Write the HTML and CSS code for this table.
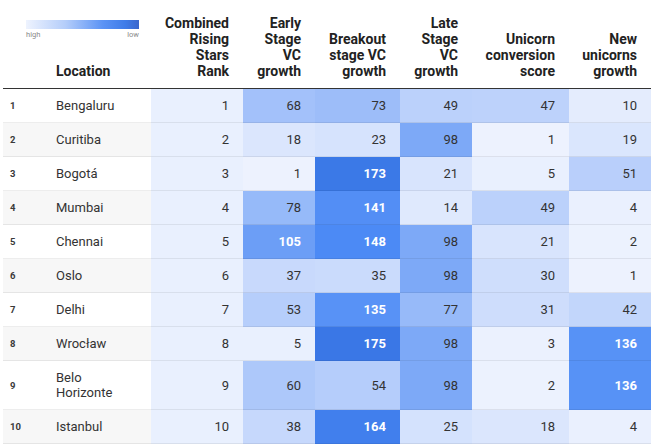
FILE: index.html
```html
<!DOCTYPE html>
<html lang="en">
<head>
<meta charset="utf-8">
<title>Rising Stars</title>
<link rel="stylesheet" href="styles.css">
</head>
<body>
<table class="heat">
  <colgroup>
    <col class="c-idx"><col class="c-loc"><col class="c-comb"><col class="c-early"><col class="c-break"><col class="c-late"><col class="c-uni"><col class="c-new">
  </colgroup>
  <thead>
    <tr>
      <th colspan="2" class="h-loc">
        <div class="h-loc-inner">
          <div class="legend">
            <div class="legend-bar"></div>
            <div class="legend-labels"><span>high</span><span>low</span></div>
          </div>
          <div class="loc-label">Location</div>
        </div>
      </th>
      <th>Combined<br>Rising<br>Stars<br>Rank</th>
      <th>Early<br>Stage<br>VC<br>growth</th>
      <th>Breakout<br>stage VC<br>growth</th>
      <th>Late<br>Stage<br>VC<br>growth</th>
      <th>Unicorn<br>conversion<br>score</th>
      <th>New<br>unicorns<br>growth</th>
    </tr>
  </thead>
  <tbody>
    <tr>
      <td class="idx">1</td><td class="loc">Bengaluru</td><td class="num comb">1</td>
      <td class="num" style="background:#a3c1fa">68</td>
      <td class="num" style="background:#9dbdf9">73</td>
      <td class="num" style="background:#bbd1fb">49</td>
      <td class="num" style="background:#bdd2fb">47</td>
      <td class="num" style="background:#e4ecfd">10</td>
    </tr>
    <tr>
      <td class="idx">2</td><td class="loc">Curitiba</td><td class="num comb">2</td>
      <td class="num" style="background:#dbe6fd">18</td>
      <td class="num" style="background:#d6e3fd">23</td>
      <td class="num" style="background:#7da9f7">98</td>
      <td class="num" style="background:#edf2fe">1</td>
      <td class="num" style="background:#dae6fd">19</td>
    </tr>
    <tr>
      <td class="idx">3</td><td class="loc">Bogotá</td><td class="num comb">3</td>
      <td class="num" style="background:#edf2fe">1</td>
      <td class="num hi" style="background:#3b79e7">173</td>
      <td class="num" style="background:#d8e4fd">21</td>
      <td class="num" style="background:#e9f0fe">5</td>
      <td class="num" style="background:#b9cffb">51</td>
    </tr>
    <tr>
      <td class="idx">4</td><td class="loc">Mumbai</td><td class="num comb">4</td>
      <td class="num" style="background:#96baf9">78</td>
      <td class="num hi" style="background:#538ef5">141</td>
      <td class="num" style="background:#dfe9fd">14</td>
      <td class="num" style="background:#bbd1fb">49</td>
      <td class="num" style="background:#eaf0fe">4</td>
    </tr>
    <tr>
      <td class="idx">5</td><td class="loc">Chennai</td><td class="num comb">5</td>
      <td class="num hi" style="background:#6c9ef6">105</td>
      <td class="num hi" style="background:#4c8af5">148</td>
      <td class="num" style="background:#7da9f7">98</td>
      <td class="num" style="background:#d8e4fd">21</td>
      <td class="num" style="background:#ecf2fe">2</td>
    </tr>
    <tr>
      <td class="idx">6</td><td class="loc">Oslo</td><td class="num comb">6</td>
      <td class="num" style="background:#c8d9fc">37</td>
      <td class="num" style="background:#cadbfc">35</td>
      <td class="num" style="background:#7da9f7">98</td>
      <td class="num" style="background:#cfdefc">30</td>
      <td class="num" style="background:#edf2fe">1</td>
    </tr>
    <tr>
      <td class="idx">7</td><td class="loc">Delhi</td><td class="num comb">7</td>
      <td class="num" style="background:#b6cefb">53</td>
      <td class="num hi" style="background:#5892f6">135</td>
      <td class="num" style="background:#97baf9">77</td>
      <td class="num" style="background:#ceddfc">31</td>
      <td class="num" style="background:#c2d6fb">42</td>
    </tr>
    <tr>
      <td class="idx">8</td><td class="loc">Wrocław</td><td class="num comb">8</td>
      <td class="num" style="background:#e9f0fe">5</td>
      <td class="num hi" style="background:#3a77e6">175</td>
      <td class="num" style="background:#7da9f7">98</td>
      <td class="num" style="background:#ebf1fe">3</td>
      <td class="num hi" style="background:#5792f6">136</td>
    </tr>
    <tr>
      <td class="idx">9</td><td class="loc">Belo<br>Horizonte</td><td class="num comb">9</td>
      <td class="num" style="background:#adc8fa">60</td>
      <td class="num" style="background:#b5cdfb">54</td>
      <td class="num" style="background:#7da9f7">98</td>
      <td class="num" style="background:#ecf2fe">2</td>
      <td class="num hi" style="background:#5792f6">136</td>
    </tr>
    <tr>
      <td class="idx">10</td><td class="loc">Istanbul</td><td class="num comb">10</td>
      <td class="num" style="background:#c6d8fc">38</td>
      <td class="num hi" style="background:#417fed">164</td>
      <td class="num" style="background:#d4e2fd">25</td>
      <td class="num" style="background:#dbe6fd">18</td>
      <td class="num" style="background:#eaf0fe">4</td>
    </tr>
  </tbody>
</table>
</body>
</html>
```

FILE: styles.css
```css
html, body {
  margin: 0;
  padding: 0;
  background: #ffffff;
}

body {
  font-family: Roboto, "Liberation Sans", Arial, sans-serif;
  color: #333333;
  overflow: hidden;
}

.heat {
  margin-left: 3px;
  width: 648px;
  table-layout: fixed;
  border-collapse: collapse;
  border-spacing: 0;
}

.c-idx { width: 41px; }
.c-loc { width: 107px; }
.c-comb { width: 92px; }
.c-early { width: 72px; }
.c-break { width: 85px; }
.c-late { width: 72px; }
.c-uni { width: 97px; }
.c-new { width: 82px; }

.heat th {
  font-size: 14px;
  line-height: 16px;
  font-weight: 700;
  color: #222222;
  text-align: right;
  vertical-align: bottom;
  white-space: nowrap;
  padding: 15px 14px 9px 0;
  height: 64px;
  border-bottom: 1px solid #333333;
}

.heat th.h-loc {
  text-align: left;
  padding: 15px 0 9px 0;
}

.h-loc-inner {
  display: flex;
  flex-direction: column;
  height: 64px;
}

.legend {
  margin: 5px 0 0 23px;
  width: 113px;
}

.legend-bar {
  height: 9px;
  background: linear-gradient(to right, #eef3fe 0%, #b4cdfa 35%, #5b93f5 68%, #3f7ce8 88%, #3a66cc 100%);
}

.legend-labels {
  display: flex;
  justify-content: space-between;
  font-size: 7.5px;
  line-height: 9px;
  font-weight: 400;
  color: #8a8a8a;
  margin-top: 1px;
}

.loc-label {
  margin-top: auto;
  padding-left: 53px;
}

.heat td {
  font-size: 13px;
  line-height: 15px;
  padding: 9px 14px 9px 0;
  border-bottom: 1px solid rgba(0, 0, 0, 0.07);
  vertical-align: middle;
}

.heat tbody tr:nth-child(even) td {
  background-color: #f7f7f7;
}

.heat td.idx {
  padding-left: 7px;
  font-size: 9.5px;
  font-weight: 700;
  color: #3a3a3a;
}

.heat td.loc {
  padding-left: 12px;
}

.heat td.num {
  text-align: right;
}

.heat td.comb,
.heat tbody tr:nth-child(even) td.comb {
  background-color: #e9f0fe;
}

.heat td.hi {
  color: #ffffff;
  font-weight: 700;
}
```
